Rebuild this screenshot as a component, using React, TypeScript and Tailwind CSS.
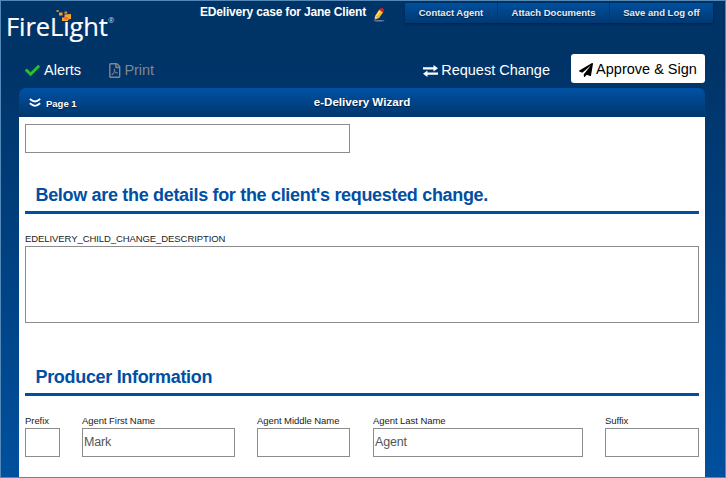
import { FaCheck, FaRegFilePdf, FaPaperPlane } from "react-icons/fa";

const menu = [
  { label: "Contact Agent", box: "w-[92px]" },
  { label: "Attach Documents", box: "w-[112px] border-l border-[#00397a]" },
  { label: "Save and Log off", box: "w-[104px] border-l border-[#00397a]" },
];

const fields = [
  { label: "Prefix", value: "", box: "w-[35px]" },
  { label: "Agent First Name", value: "Mark", box: "ml-[22px] w-[153px]" },
  { label: "Agent Middle Name", value: "", box: "ml-[22px] w-[93px]" },
  { label: "Agent Last Name", value: "Agent", box: "ml-[23px] w-[210px]" },
  { label: "Suffix", value: "", box: "ml-auto w-[94px]" },
];

function Logo() {
  return (
    <div className="relative h-[38px] w-[112px] text-white">
      <span className="block whitespace-nowrap font-['Open_Sans',sans-serif] text-[25.5px] leading-[35px] tracking-[-0.1px] [-webkit-text-stroke:0.2px_white]">
        FireLight
      </span>
      <span className="absolute left-[102px] top-[6px] font-['Open_Sans',sans-serif] text-[7.5px] leading-[10px] text-[#c8d4e2]">®</span>
      <svg className="absolute left-[49px] top-0 h-[14px] w-[18px]" viewBox="0 0 18 14">
        <rect x="1.5" y="1" width="2.2" height="2" fill="#c98a3c" />
        <rect x="4" y="3.5" width="3.6" height="3" fill="#f49b2c" />
        <rect x="9.500" y="2.500" width="2.6" height="2.300" fill="#d98d35" />
        <path d="M9.500 5.5L16 5v5l-3 .5v1.500H7V8.500H9.500z" fill="#f9a132" />
        <rect x="9.200" y="8" width="3.500" height="2.500" fill="#f26a24" />
      </svg>
    </div>
  );
}

function Pencil() {
  return (
    <svg className="h-[15px] w-[13px]" viewBox="0 0 13 15">
      <ellipse cx="6" cy="13.700" rx="5.500" ry=".7" fill="#6d87a3" />
      <path d="M1.500 12.800L2 8.700 5.600 11z" fill="#f1dfbd" />
      <path d="M2 9L6.300 2.600 10.300 5 5.800 11.600z" fill="#f7b92c" />
      <path d="M3.500 9L7.500 3.200" stroke="#ffe48a" strokeWidth="1.200" />
      <path d="M6.300 2.900L7.300 1.200Q10.500.4 11.200 3L10 5.300z" fill="#c81f28" />
      <path d="M1.300 13l.3-1.700 1.200.7z" fill="#443b35" />
    </svg>
  );
}

function Exchange() {
  return (
    <svg className="h-[12px] w-[15px]" viewBox="0 0 15 12" fill="white">
      <path d="M0 2.200h10.500V0L15 3.300 10.500 6.400V4.500H0zM15 9.800H4.500V12L0 8.700 4.500 5.600v1.900H15z" />
    </svg>
  );
}

function SectionTitle({ children }: { children: string }) {
  return (
    <h2 className="h-[35px] whitespace-nowrap border-b-[3px] border-[#004fa3] pl-[10.5px] pt-[4px] text-[18px] font-bold leading-6 tracking-[-0.32px] text-[#004fa3]">
      {children}
    </h2>
  );
}

export default function App() {
  return (
    <div className="flex h-[478px] w-[726px] flex-col overflow-hidden border border-[#5289b8] bg-linear-to-b from-[#003366] from-10% to-[#00509e] font-['Liberation_Sans',Arial,sans-serif]">
      <header className="flex h-[48px] shrink-0">
        <div className="w-[199px] pl-[5px] pt-[8px]">
          <Logo />
        </div>
        <div className="flex w-[204px] gap-[7px] pt-[4px] text-white">
          <span className="whitespace-nowrap text-[12px] font-bold leading-[15px] tracking-[-0.18px]">EDelivery case for Jane Client</span>
          <span className="pt-[2px]">
            <Pencil />
          </span>
        </div>
        <nav className="ml-[1px] mt-[2px] flex h-[20px] bg-linear-to-b from-[#004f9e] to-[#003972] shadow-[0_1px_2px_#00234a]">
          {menu.map((m) => (
            <a key={m.label} className={`${m.box} whitespace-nowrap text-center text-[9.500px] font-bold leading-[20px] text-[#e6edf5] [text-shadow:0_1px_1px_#001c3a]`}>
              {m.label}
            </a>
          ))}
        </nav>
      </header>

      <div className="flex h-[39px] shrink-0 items-center pl-[25px] pr-[20px] pt-[3px] text-[14.5px] text-white">
        <span className="flex w-[83px] items-center gap-[4px] pt-[1px]">
          <FaCheck className="size-[15px] -ml-px text-[#23c423]" />
          Alerts
        </span>
        <span className="flex items-center gap-[4px] pt-[1px] tracking-[-0.1px] text-[#81868d]">
          <FaRegFilePdf className="h-[15px] w-[11.5px]" />
          Print
        </span>
        <span className="ml-auto mr-[21px] flex items-center gap-[3px] pt-[1px]">
          <Exchange />
          Request Change
        </span>
        <button className="mb-[3px] flex h-[29px] w-[134px] items-center justify-center gap-[3px] whitespace-nowrap rounded-[3px] bg-white pt-[3px] text-black">
          <FaPaperPlane className="size-[14px]" />
          Approve &amp; Sign
        </button>
      </div>

      <main className="ml-[18px] mr-[20px] flex flex-1 flex-col">
        <div className="grid h-[29px] grid-cols-3 rounded-t-[7px] bg-linear-to-b from-[#0052a5] to-[#00366c] font-bold text-white [text-shadow:0_1px_1px_#001c3a]">
          <div className="flex items-center gap-[5px] pl-[10px] text-[9.500px]">
            <svg className="h-[10px] w-[12px]" viewBox="0 0 12 10" fill="none" stroke="white" strokeWidth="1.900">
              <path d="M.8 1Q4 3.300 6 3.500Q8 3.300 11.200 1M.8 5.200Q4 7.700 6 7.900Q8 7.700 11.200 5.200" />
            </svg>
            <span className="pt-[3px]">Page 1</span>
          </div>
          <div className="text-center text-[11.600px] leading-[28px]">e-Delivery Wizard</div>
        </div>
        <div className="flex-1 bg-white px-[6px] pt-[7px] text-[#222]">
          <div className="h-[29px] w-[325px] border border-[#8c8c8c]" />
          <div className="mt-[26px]">
            <SectionTitle>Below are the details for the client's requested change.</SectionTitle>
          </div>
          <div className="mt-[19px] text-[9.500px] leading-[12px] tracking-[-0.08px]">EDELIVERY_CHILD_CHANGE_DESCRIPTION</div>
          <div className="mt-[1px] h-[77px] border border-[#8c8c8c]" />
          <div className="mt-[38px]">
            <SectionTitle>Producer Information</SectionTitle>
          </div>
          <div className="mt-[19px] flex">
            {fields.map((f) => (
              <div key={f.label} className={f.box}>
                <div className="whitespace-nowrap text-[9.500px] leading-[12px] tracking-[-0.06px]">{f.label}</div>
                <div className="mt-[1px] h-[29px] border border-[#8c8c8c] pl-[1px] text-[12.5px] leading-[27px] tracking-[-0.2px] text-[#555]">{f.value}</div>
              </div>
            ))}
          </div>
        </div>
      </main>
    </div>
  );
}
